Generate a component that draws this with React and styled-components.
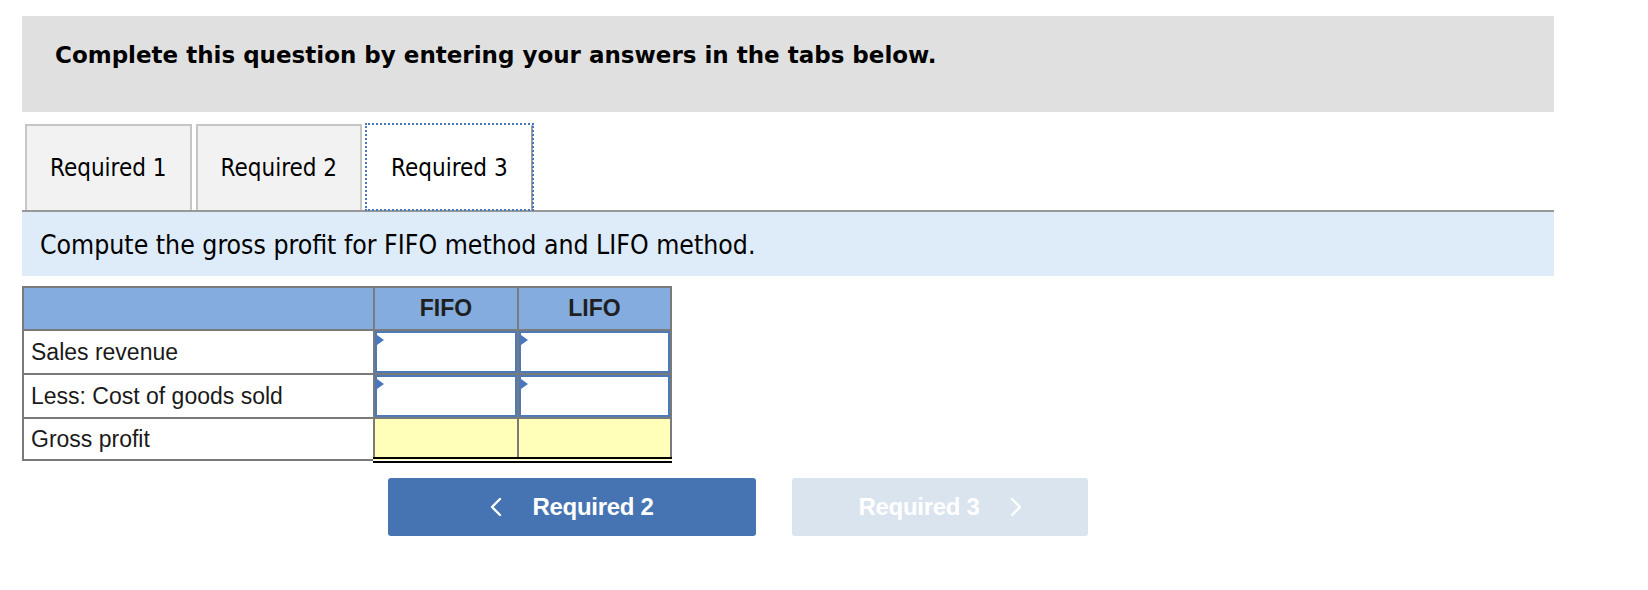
import React, { useState } from 'react'
import styled, { createGlobalStyle } from 'styled-components'

const GlobalStyle = createGlobalStyle`
  html, body {
    margin: 0;
    padding: 0;
    background: #ffffff;
  }
  body {
    font-family: "DejaVu Sans", sans-serif;
  }
`

const Page = styled.div`
  padding: 16px 0 0 22px;
  width: 1532px;
`

const Banner = styled.div`
  box-sizing: border-box;
  height: 96px;
  background: #e0e0e0;
  padding: 26px 33px 0;
  font-family: "DejaVu Sans", Verdana, sans-serif;
  font-weight: bold;
  font-size: 23px;
  color: #000;
`

const TabBar = styled.div`
  display: flex;
  gap: 4px;
  margin-top: 12px;
  padding-left: 3px;
  border-bottom: 2px solid #999999;
`

const Tab = styled.button`
  box-sizing: border-box;
  height: 86px;
  padding: 0 23px;
  font-family: "DejaVu Sans Condensed", "DejaVu Sans", sans-serif;
  font-stretch: condensed;
  font-size: 24px;
  color: #000;
  cursor: pointer;
  background: ${(p) => (p.$active ? '#ffffff' : '#f2f2f2')};
  border: 2px solid ${(p) => (p.$active ? 'transparent' : '#c6c6c6')};
  border-bottom: none;
  ${(p) =>
    p.$active &&
    `
    border-right-color: #a0a0a0;
    outline: 2px dotted #4a78bd;
    outline-offset: -1px;
  `}
`

const Prompt = styled.div`
  box-sizing: border-box;
  height: 64px;
  display: flex;
  align-items: center;
  padding-left: 18px;
  background: #deebf8;
  font-family: "DejaVu Sans Condensed", "DejaVu Sans", sans-serif;
  font-stretch: condensed;
  font-size: 26.4px;
  color: #000;
`

const Grid = styled.table`
  margin-top: 10px;
  border-collapse: collapse;
  font-family: "Liberation Sans", Arial, sans-serif;
  font-size: 23px;
  color: #1a1a1a;
`

const HeadCell = styled.th`
  height: 41px;
  padding: 0;
  width: ${(p) => p.$w}px;
  background: #84acdf;
  border: 2px solid #7a7a7a;
  font-weight: bold;
  text-align: center;
  color: #1f1f1f;
`

const LabelCell = styled.td`
  height: ${(p) => p.$h}px;
  padding: 0 0 0 7px;
  border: 2px solid #7a7a7a;
  text-align: left;
  vertical-align: middle;
  white-space: nowrap;
`

const InputCell = styled.td`
  padding: 0;
  border: 2px solid #7a7a7a;
  background: #fff;
`

const InputWrap = styled.div`
  position: relative;
  box-sizing: border-box;
  height: ${(p) => p.$h}px;
  border: 2px solid #4b79b9;
  margin: 0;
  &::before {
    content: '';
    position: absolute;
    left: 0;
    top: 2px;
    border-left: 7px solid #4a78c0;
    border-top: 5px solid transparent;
    border-bottom: 5px solid transparent;
  }
`

const CellInput = styled.input`
  box-sizing: border-box;
  width: 100%;
  height: 100%;
  border: none;
  outline: none;
  background: transparent;
  font: inherit;
  text-align: right;
  padding: 0 6px;
`

const TotalCell = styled.td`
  padding: 0;
  height: 38px;
  background: #ffffb9;
  border: 2px solid #7a7a7a;
  border-top: 2px solid #000;
  border-bottom: 6px double #000;
`

const NavRow = styled.div`
  display: flex;
  gap: 36px;
  margin-top: 15px;
  padding-left: 366px;
`

const NavButton = styled.button`
  box-sizing: border-box;
  width: ${(p) => p.$w}px;
  height: 58px;
  display: flex;
  align-items: center;
  justify-content: center;
  gap: 30px;
  border: none;
  border-radius: 3px;
  background: ${(p) => (p.$disabled ? '#dae4ef' : '#4674b2')};
  color: #ffffff;
  font-family: "Liberation Sans", Arial, sans-serif;
  font-weight: bold;
  font-size: 24px;
  letter-spacing: -0.3px;
  cursor: ${(p) => (p.$disabled ? 'default' : 'pointer')};
  padding: 0;
`

const Chevron = ({ dir }) => (
  <svg width="12" height="20" viewBox="0 0 12 20" fill="none">
    <polyline
      points={dir === 'left' ? '10,2 2,10 10,18' : '2,2 10,10 2,18'}
      stroke="#ffffff"
      strokeWidth="2.4"
      strokeLinecap="round"
      strokeLinejoin="round"
    />
  </svg>
)

const rows = [
  { label: 'Sales revenue', h: 42 },
  { label: 'Less: Cost of goods sold', h: 42 },
]

export default function App() {
  const [active, setActive] = useState(3)
  const [values, setValues] = useState({})

  const setVal = (key, v) => setValues((s) => ({ ...s, [key]: v }))

  return (
    <>
      <GlobalStyle />
      <Page>
        <Banner>Complete this question by entering your answers in the tabs below.</Banner>
        <TabBar>
          {[1, 2, 3].map((n) => (
            <Tab key={n} $active={active === n} onClick={() => setActive(n)}>
              Required {n}
            </Tab>
          ))}
        </TabBar>
        <Prompt>Compute the gross profit for FIFO method and LIFO method.</Prompt>
        <Grid>
          <thead>
            <tr>
              <HeadCell $w={349}></HeadCell>
              <HeadCell $w={142}>FIFO</HeadCell>
              <HeadCell $w={151}>LIFO</HeadCell>
            </tr>
          </thead>
          <tbody>
            {rows.map((r, i) => (
              <tr key={r.label}>
                <LabelCell $h={r.h}>{r.label}</LabelCell>
                {['fifo', 'lifo'].map((c) => (
                  <InputCell key={c}>
                    <InputWrap $h={r.h}>
                      <CellInput
                        value={values[c + i] || ''}
                        onChange={(e) => setVal(c + i, e.target.value)}
                      />
                    </InputWrap>
                  </InputCell>
                ))}
              </tr>
            ))}
            <tr>
              <LabelCell $h={38}>Gross profit</LabelCell>
              <TotalCell />
              <TotalCell />
            </tr>
          </tbody>
        </Grid>
        <NavRow>
          <NavButton $w={368} onClick={() => setActive(2)}>
            <Chevron dir="left" />
            <span>Required 2</span>
          </NavButton>
          <NavButton $w={296} $disabled>
            <span>Required 3</span>
            <Chevron dir="right" />
          </NavButton>
        </NavRow>
      </Page>
    </>
  )
}
